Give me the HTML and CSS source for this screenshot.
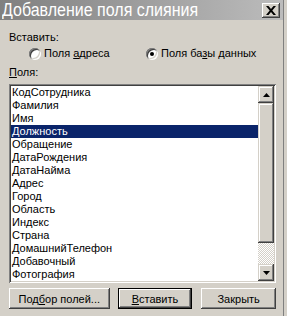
FILE: index.html
```html
<!DOCTYPE html>
<html lang="ru">
<head>
  <meta charset="UTF-8" />
  <title>Добавление поля слияния</title>
  <link rel="stylesheet" href="styles.css">
</head>
<body>
  <div class="window">
    <div class="titlebar">
      <span class="title">Добавление поля слияния</span>
      <span class="close-btn">
        <svg width="10" height="9" viewBox="0 0 10 9"><path d="M0 0h2.5L5 3 7.5 0H10L6.3 4.5 10 9H7.5L5 6 2.5 9H0l3.7-4.5z" fill="#000"/></svg>
      </span>
    </div>

    <div class="content">
      <div class="caption">Вставить:</div>
      <div class="radios">
        <label class="radio"><span class="circle"></span><span>Поля <u>а</u>дреса</span></label>
        <label class="radio checked"><span class="circle"></span><span>Поля ба<u>з</u>ы данных</span></label>
      </div>

      <div class="caption"><u>П</u>оля:</div>
      <div class="listbox">
        <ul class="items">
          <li>КодСотрудника</li>
          <li>Фамилия</li>
          <li>Имя</li>
          <li class="selected">Должность</li>
          <li>Обращение</li>
          <li>ДатаРождения</li>
          <li>ДатаНайма</li>
          <li>Адрес</li>
          <li>Город</li>
          <li>Область</li>
          <li>Индекс</li>
          <li>Страна</li>
          <li>ДомашнийТелефон</li>
          <li>Добавочный</li>
          <li>Фотография</li>
        </ul>
        <div class="scrollbar">
          <span class="arrow up"><svg width="7" height="4" viewBox="0 0 7 4"><path d="M3.5 0L7 4H0z" fill="#000"/></svg></span>
          <span class="thumb"></span>
          <span class="track"></span>
          <span class="arrow down"><svg width="7" height="4" viewBox="0 0 7 4"><path d="M0 0h7L3.5 4z" fill="#000"/></svg></span>
        </div>
      </div>

      <div class="buttons">
        <button class="btn wide">Под<u>б</u>ор полей...</button>
        <button class="btn default"><u>В</u>ставить</button>
        <button class="btn">Закрыть</button>
      </div>
    </div>
  </div>
</body>
</html>
```

FILE: styles.css
```css
body {
  margin: 0;
  background: #d4d0c8;
  font-family: 'Liberation Sans', Arial, sans-serif;
  font-size: 11px;
  color: #000;
}

.window {
  width: 283px;
  height: 316px;
  border-right: 1px solid #808080;
  background: #d4d0c8;
}

.titlebar {
  height: 20px;
  display: flex;
  align-items: center;
  justify-content: space-between;
  background: linear-gradient(to right, #808080, #bcbcbc);
  padding: 0 3px 0 2px;
}

.title {
  color: #fff;
  font-size: 16px;
  line-height: 20px;
  white-space: nowrap;
  transform: scaleY(1.1);
}

.close-btn {
  width: 18px;
  height: 15px;
  display: flex;
  align-items: center;
  justify-content: center;
  background: #d4d0c8;
  box-shadow: inset -1px -1px #404040, inset 1px 1px #fff, inset -2px -2px #808080;
}

.content {
  padding: 11px 7px 0 9px;
}

.caption {
  line-height: 13px;
}

.radios {
  display: flex;
  padding: 3px 0 6px 20px;
}

.radio {
  display: flex;
  align-items: center;
  line-height: 13px;
  width: 117px;
}

.circle {
  width: 12px;
  height: 12px;
  border-radius: 50%;
  background: #fff;
  margin-right: 3px;
  box-shadow: inset 1px 1px #808080, inset -1px -1px #fff, inset 2px 2px #404040, inset -2px -2px #d4d0c8;
  display: flex;
  align-items: center;
  justify-content: center;
}

.checked .circle::after {
  content: "";
  width: 4px;
  height: 4px;
  border-radius: 50%;
  background: #000;
}

.listbox {
  margin-top: 5px;
  height: 199px;
  width: 267px;
  box-sizing: border-box;
  display: flex;
  padding: 2px;
  background: #fff;
  box-shadow: inset 1px 1px #808080, inset -1px -1px #fff, inset 2px 2px #404040, inset -2px -2px #d4d0c8;
}

.items {
  list-style: none;
  margin: 0;
  padding: 0;
  flex: 1;
}

.items li {
  height: 13px;
  line-height: 13px;
  padding-left: 1px;
  white-space: nowrap;
}

.items li.selected {
  background: #0a246a;
  color: #fff;
}

.scrollbar {
  width: 16px;
  display: flex;
  flex-direction: column;
}

.arrow, .thumb {
  background: #d4d0c8;
  box-shadow: inset -1px -1px #404040, inset 1px 1px #d4d0c8, inset -2px -2px #808080, inset 2px 2px #fff;
}

.arrow {
  height: 17px;
  display: flex;
  align-items: center;
  justify-content: center;
}

.thumb {
  height: 140px;
}

.track {
  flex: 1;
  background: repeating-conic-gradient(#fff 0 25%, #d4d0c8 0 50%) 0 0 / 2px 2px;
}

.buttons {
  display: flex;
  gap: 8px;
  margin-top: 5px;
}

.btn {
  font: inherit;
  width: 75px;
  height: 21px;
  padding: 0;
  border: none;
  background: #d4d0c8;
  color: #000;
  box-shadow: inset -1px -1px #404040, inset 1px 1px #fff, inset -2px -2px #808080, inset 2px 2px #d4d0c8;
}

.btn.wide {
  width: 101px;
}

.btn.default {
  margin-right: 1px;
  box-shadow: inset 0 0 0 1px #000, inset -2px -2px #404040, inset 2px 2px #fff, inset -3px -3px #808080;
}
```
